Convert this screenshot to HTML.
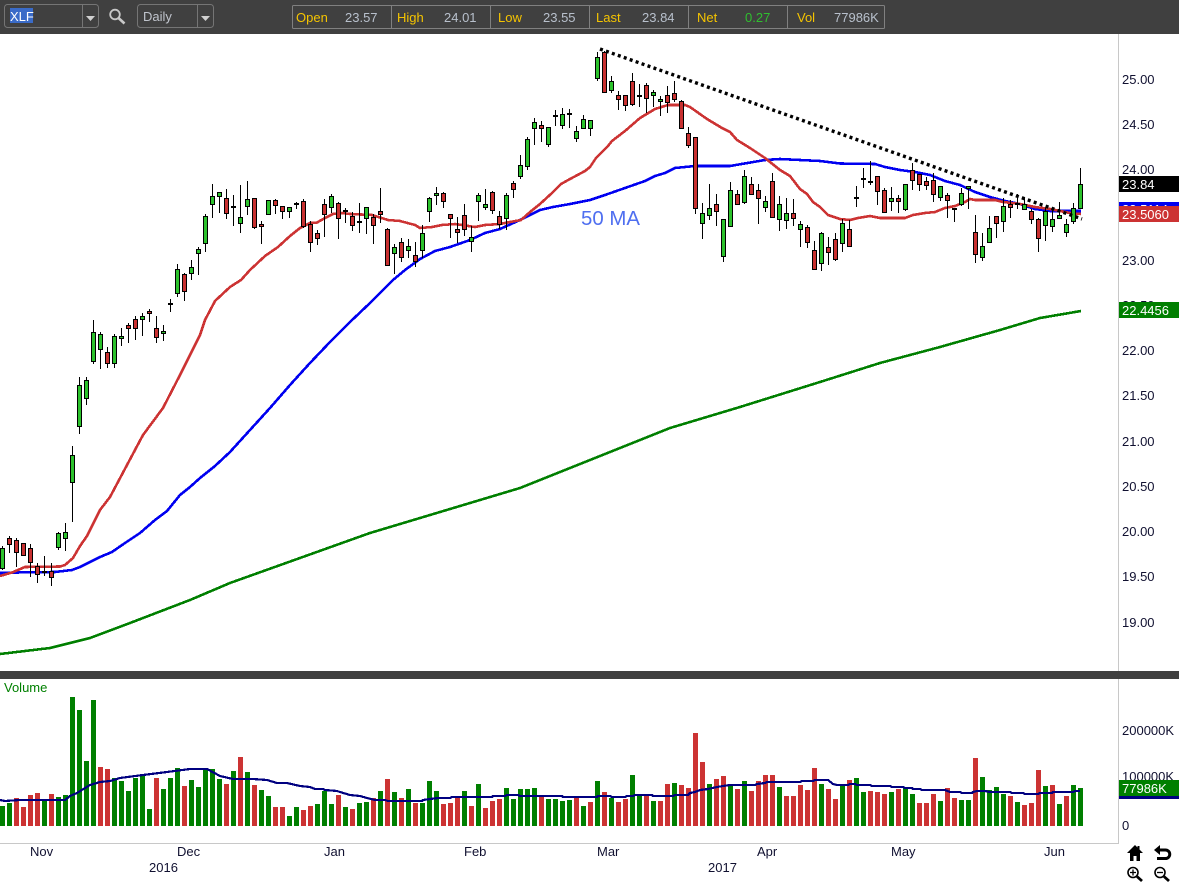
<!DOCTYPE html>
<html><head><meta charset="utf-8"><title>XLF Daily</title>
<style>
html,body{margin:0;padding:0;background:#fff;width:1179px;height:883px;overflow:hidden}
svg{display:block}
text{font-family:"Liberation Sans",Arial,sans-serif;font-size:13px}
.l{fill:#f5c400}.v{fill:#b8c0cc}.a{fill:#101030}.w{fill:#fff}
</style></head><body>
<svg width="1179" height="883" viewBox="0 0 1179 883" xmlns="http://www.w3.org/2000/svg">
<rect width="1179" height="883" fill="#fff"/>
<!-- toolbar -->
<rect width="1179" height="34" fill="#404040"/>
<g fill="none" stroke="#757575" stroke-width="1">
<rect x="4.5" y="4.5" width="94" height="23" rx="3"/><path d="M82.5 5V27"/>
<rect x="137.5" y="4.5" width="76" height="23" rx="3"/><path d="M197.5 5V27"/>
<rect x="292.5" y="5.5" width="592" height="23" rx="1" stroke="#808080"/>
<path d="M391.5 6V28M490.5 6V28M589.5 6V28M688.5 6V28M787.5 6V28" stroke="#808080"/>
</g>
<rect x="10" y="8" width="23" height="15" fill="#3a6bc8"/>
<text x="10" y="21" fill="#fff">XLF</text>
<path d="M86 16h9l-4.500 5zM201 16h9l-4.500 5z" fill="#d0d0d0"/>
<circle cx="115" cy="14.500" r="4.800" fill="none" stroke="#c8c8c8" stroke-width="1.800"/>
<path d="M118.500 18l6 5.500" stroke="#c8c8c8" stroke-width="2.600" fill="none"/>
<text x="143" y="21" fill="#c0c4cc">Daily</text>
<text class="l" x="296" y="22">Open</text><text class="v" x="345" y="22">23.57</text>
<text class="l" x="397" y="22">High</text><text class="v" x="444" y="22">24.01</text>
<text class="l" x="498" y="22">Low</text><text class="v" x="543" y="22">23.55</text>
<text class="l" x="596" y="22">Last</text><text class="v" x="642" y="22">23.84</text>
<text class="l" x="697" y="22">Net</text><text x="745" y="22" fill="#2fbf2f">0.27</text>
<text class="l" x="797" y="22">Vol</text><text class="v" x="834" y="22">77986K</text>
<!-- frame -->
<rect y="671" width="1179" height="8" fill="#404040"/>
<path d="M1118.500 34V671M1118.500 679V844M0 843.500H1118" stroke="#c8c8c8" stroke-width="1" fill="none" shape-rendering="crispEdges"/>
<!-- moving averages -->
<g fill="none" stroke-width="2.600" stroke-linejoin="round" shape-rendering="crispEdges">
<polyline stroke="#007f00" points="0,654 50,648 90,638 130,623 190,600 230,583 300,558 370,533 440,512 520,488 600,456 670,428 740,407 820,382 880,363 940,347 1000,330 1040,318 1081,311"/>
<polyline stroke="#0000f0" points="0,573 15,572.500 55,572 72,570 80,567 90,562 100,557 112,552 125,543 140,533 155,520 167,511 180,495 190,487 200,478 215,466 230,452 250,430 270,408 290,385 310,363 330,342 350,322 370,303 393,280 405,270 420,259 435,251 450,247 470,240 485,233 500,229 520,220 540,210 553,207 570,204 590,200 605,195 625,188 645,181 655,176 665,173 675,168 695,166 730,166 765,160 780,159 800,160 820,161 840,163.500 875,164 885,167 900,170 915,172 930,175 945,181 960,185 975,192 990,197 1005,201 1020,204 1035,209 1050,211 1081,211"/>
<polyline stroke="#cc3333" points="0,576 12,572.500 25,567 60,566.500 65,565 73,558 80,546 87,536 100,510 110,497 127,465 143,435 163,408 180,375 200,335 205,320 215,301 230,287 241,280 250,270 265,256 278,247 290,236 300,228 310,223 317,222.500 325,218 333,214 342,213 350,214 372,215 388,220 400,221 415,225 420,228 432,227 442,225 455,224 475,227 485,225 500,224 510,222 521,220 530,212 540,204 552,193 561,184 570,179 585,171 590,167 596,158 608,146 612,141 625,131 640,118 655,109 668,105 685,105 690,107 707,119 722,128 730,132 737,140 750,148 765,158 780,170 790,176 800,189 807,194 813,202 820,207 828,215 840,219 850,220 858,218 870,216 880,218 905,218 913,215 925,213 935,212 945,208 955,206 965,202 970,199 975,200 995,200 1003,202 1020,204 1035,207 1050,209 1060,211 1070,213 1081,214"/>
</g>
<!-- wicks -->
<path shape-rendering="crispEdges" fill="none" stroke="#000" stroke-width="1" d="M2.500 546V570M9.500 536V553M16.500 538V567M30.500 544V577M37.500 563V583M44.500 556V576M51.500 563V586M58.500 532V550M65.500 523V551M72.500 446V522M79.500 377V434M86.500 377V405M93.500 320V364M100.500 332V369M107.500 347V368M114.500 334V368M121.500 328V346M128.500 323V343M135.500 316V340M142.500 313V336M149.500 309V322M156.500 316V343M163.500 325V341M170.500 299V312M177.500 264V297M184.500 273V301M191.500 260V280M198.500 247V275M205.500 214V252M212.500 184V218M219.500 192V213M226.500 189V219M233.500 195V226M240.500 185V233M247.500 181V215M254.500 198V229M261.500 221V244M275.500 199V214M282.500 206V219M289.500 207V218M296.500 202V209M303.500 199V228M310.500 221V252M317.500 230V245M324.500 199V237M331.500 194V213M338.500 202V239M345.500 208V223M352.500 212V231M359.500 203V233M366.500 207V234M373.500 214V244M380.500 188V223M387.500 228V266M394.500 244V274M401.500 238V262M408.500 239V258M415.500 242V267M422.500 225V258M429.500 197V222M436.500 187V205M443.500 192V208M450.500 214V238M457.500 217V243M464.500 204V236M471.500 226V252M478.500 193V221M485.500 189V210M492.500 191V214M499.500 211V229M506.500 193V230M513.500 181V198M520.500 155V179M527.500 137V170M534.500 118V145M541.500 121V142M548.500 127V147M555.500 110V126M562.500 108V129M569.500 109V128M576.500 126V142M583.500 115V129M590.500 120V136M597.500 52V81M604.500 51V93M611.500 76V93M618.500 91V110M625.500 95V111M632.500 73V106M639.500 84V107M646.500 83V113M653.500 90V107M660.500 96V116M667.500 86V113M674.500 81V102M681.500 100V128M688.500 127V148M695.500 137V214M702.500 203V239M709.500 184V220M716.500 194V226M723.500 219V262M730.500 182V226M737.500 190V205M744.500 170V204M751.500 177V195M758.500 184V224M765.500 196V212M772.500 173V218M779.500 196V231M786.500 198V229M793.500 199V226M800.500 221V247M807.500 225V248M814.500 241V270M821.500 232V271M828.500 237V265M835.500 233V261M842.500 219V252M849.500 220V247M856.500 186V207M863.500 168V188M870.500 161V185M877.500 176V205M884.500 188V213M891.500 187V211M898.500 195V213M905.500 184V211M912.500 163V190M919.500 174V191M926.500 177V190M933.500 173V202M940.500 186V201M947.500 193V218M954.500 208V222M961.500 188V206M968.500 186V209M975.500 215V263M982.500 233V261M989.500 216V243M996.500 216V238M1003.500 198V232M1010.500 200V218M1017.500 194V209M1024.500 198V210M1031.500 209V224M1038.500 218V252M1045.500 208V241M1052.500 208V232M1059.500 202V218M1066.500 219V237M1073.500 203V224M1080.500 168V209"/>
<!-- dojis -->
<path shape-rendering="crispEdges" fill="#000" d="M42 571h5v2h-5zM168 303h5v2h-5zM231 206h5v2h-5zM294 203h5v2h-5zM343 210h5v2h-5zM357 221h5v2h-5zM553 115h5v2h-5zM567 113h5v2h-5zM637 95h5v2h-5zM854 197h5v2h-5zM861 178h5v2h-5zM868 181h5v2h-5zM952 208h5v2h-5zM1015 203h5v2h-5z"/>
<!-- green bodies -->
<path shape-rendering="crispEdges" fill="#2cc22c" stroke="#000" stroke-width="1" d="M.5 548.500h4v20h-4zM56.500 533.500h4v14h-4zM63.500 532.500h4v6h-4zM70.500 455.500h4v27h-4zM77.500 385.500h4v41h-4zM84.500 380.500h4v18h-4zM91.500 332.500h4v29h-4zM98.500 334.500h4v15h-4zM112.500 336.500h4v27h-4zM119.500 336.500h4v2h-4zM140.500 316.500h4v3h-4zM161.500 331.500h4v2h-4zM175.500 269.500h4v24h-4zM189.500 267.500h4v6h-4zM196.500 249.500h4v4h-4zM203.500 216.500h4v27h-4zM210.500 196.500h4v8h-4zM217.500 192.500h4v4h-4zM238.500 217.500h4v6h-4zM245.500 199.500h4v7h-4zM266.500 200.500h4v14h-4zM287.500 207.500h4v4h-4zM329.500 196.500h4v11h-4zM364.500 207.500h4v11h-4zM392.500 247.500h4v6h-4zM406.500 246.500h4v4h-4zM420.500 233.500h4v17h-4zM427.500 198.500h4v13h-4zM434.500 193.500h4v2h-4zM469.500 237.500h4v4h-4zM476.500 195.500h4v6h-4zM483.500 204.500h4v3h-4zM504.500 195.500h4v23h-4zM518.500 165.500h4v11h-4zM525.500 139.500h4v27h-4zM532.500 122.500h4v6h-4zM546.500 127.500h4v17h-4zM560.500 114.500h4v11h-4zM574.500 131.500h4v7h-4zM581.500 119.500h4v9h-4zM588.500 120.500h4v8h-4zM595.500 57.500h4v21h-4zM609.500 81.500h4v9h-4zM651.500 92.500h4v3h-4zM658.500 99.500h4v2h-4zM700.500 213.500h4v10h-4zM707.500 208.500h4v7h-4zM721.500 219.500h4v37h-4zM728.500 190.500h4v36h-4zM742.500 176.500h4v26h-4zM763.500 201.500h4v6h-4zM777.500 204.500h4v15h-4zM784.500 213.500h4v7h-4zM798.500 224.500h4v5h-4zM819.500 233.500h4v30h-4zM840.500 223.500h4v20h-4zM889.500 198.500h4v3h-4zM903.500 184.500h4v25h-4zM938.500 186.500h4v11h-4zM959.500 193.500h4v11h-4zM966.500 186.500h4v2h-4zM980.500 246.500h4v11h-4zM987.500 228.500h4v14h-4zM1001.500 206.500h4v15h-4zM1022.500 204.500h4v5h-4zM1043.500 211.500h4v14h-4zM1050.500 219.500h4v7h-4zM1057.500 215.500h4v3h-4zM1064.500 224.500h4v8h-4zM1071.500 208.500h4v13h-4zM1078.500 184.500h4v24h-4z"/>
<!-- red bodies -->
<path shape-rendering="crispEdges" fill="#c83030" stroke="#000" stroke-width="1" d="M7.500 538.500h4v6h-4zM14.500 540.500h4v12h-4zM21.500 543.500h4v12h-4zM28.500 548.500h4v14h-4zM35.500 566.500h4v8h-4zM49.500 571.500h4v6h-4zM105.500 352.500h4v11h-4zM126.500 325.500h4v3h-4zM133.500 319.500h4v9h-4zM147.500 311.500h4v2h-4zM154.500 328.500h4v9h-4zM182.500 274.500h4v17h-4zM224.500 198.500h4v15h-4zM252.500 198.500h4v29h-4zM259.500 224.500h4v2h-4zM273.500 200.500h4v5h-4zM280.500 206.500h4v5h-4zM301.500 201.500h4v25h-4zM308.500 224.500h4v18h-4zM315.500 233.500h4v5h-4zM322.500 204.500h4v10h-4zM336.500 203.500h4v15h-4zM350.500 216.500h4v9h-4zM371.500 217.500h4v8h-4zM378.500 211.500h4v3h-4zM385.500 229.500h4v36h-4zM399.500 242.500h4v15h-4zM413.500 255.500h4v6h-4zM441.500 193.500h4v8h-4zM448.500 214.500h4v4h-4zM455.500 229.500h4v3h-4zM462.500 215.500h4v14h-4zM490.500 192.500h4v18h-4zM497.500 216.500h4v8h-4zM511.500 183.500h4v6h-4zM539.500 125.500h4v3h-4zM602.500 52.500h4v40h-4zM616.500 95.500h4v4h-4zM623.500 95.500h4v10h-4zM630.500 81.500h4v23h-4zM644.500 85.500h4v13h-4zM665.500 95.500h4v7h-4zM672.500 93.500h4v6h-4zM679.500 101.500h4v27h-4zM686.500 133.500h4v12h-4zM693.500 137.500h4v71h-4zM714.500 204.500h4v7h-4zM735.500 194.500h4v10h-4zM749.500 184.500h4v10h-4zM756.500 190.500h4v8h-4zM770.500 181.500h4v36h-4zM791.500 213.500h4v5h-4zM805.500 227.500h4v15h-4zM812.500 250.500h4v19h-4zM826.500 247.500h4v5h-4zM833.500 239.500h4v20h-4zM847.500 229.500h4v17h-4zM875.500 176.500h4v15h-4zM882.500 190.500h4v22h-4zM896.500 198.500h4v3h-4zM910.500 170.500h4v10h-4zM917.500 174.500h4v10h-4zM924.500 181.500h4v4h-4zM931.500 180.500h4v14h-4zM945.500 195.500h4v5h-4zM973.500 232.500h4v22h-4zM994.500 216.500h4v7h-4zM1008.500 204.500h4v3h-4zM1029.500 211.500h4v8h-4zM1036.500 219.500h4v19h-4z"/>
<!-- trend line -->
<path d="M600 49L1082 219" stroke="#000" stroke-width="3.400" stroke-dasharray="3 3.300" fill="none"/>
<text x="581" y="225" style="font-size:20.400px" fill="#4f6ff0">50 MA</text>
<!-- price axis -->
<g class="a">
<text class="a" x="1122" y="84">25.00</text>
<text class="a" x="1122" y="129">24.50</text>
<text class="a" x="1122" y="174">24.00</text>
<text class="a" x="1122" y="265">23.00</text>
<text class="a" x="1122" y="310">22.50</text>
<text class="a" x="1122" y="355">22.00</text>
<text class="a" x="1122" y="400">21.50</text>
<text class="a" x="1122" y="446">21.00</text>
<text class="a" x="1122" y="491">20.50</text>
<text class="a" x="1122" y="536">20.00</text>
<text class="a" x="1122" y="581">19.50</text>
<text class="a" x="1122" y="627">19.00</text>
</g>
<rect x="1119" y="176" width="60" height="16" fill="#000"/><text class="w" x="1122" y="189">23.84</text>
<rect x="1119" y="202" width="60" height="16" fill="#0000f0"/><text class="w" x="1122" y="214">23.5114</text>
<rect x="1119" y="206" width="60" height="16" fill="#cc3333"/><text class="w" x="1122" y="219">23.5060</text>
<rect x="1119" y="302" width="60" height="16" fill="#007f00"/><text class="w" x="1122" y="315">22.4456</text>
<!-- volume -->
<text x="4" y="692" fill="#008000">Volume</text>
<path shape-rendering="crispEdges" fill="#007f00" d="M0 806h5V826h-5zM7 803h5V826h-5zM42 800h5V826h-5zM56 797h5V826h-5zM63 795h5V826h-5zM70 697h5V826h-5zM77 710h5V826h-5zM84 761h5V826h-5zM91 700h5V826h-5zM112 778h5V826h-5zM119 781h5V826h-5zM126 791h5V826h-5zM133 778h5V826h-5zM140 776h5V826h-5zM147 809h5V826h-5zM161 789h5V826h-5zM168 778h5V826h-5zM175 768h5V826h-5zM189 780h5V826h-5zM196 787h5V826h-5zM203 769h5V826h-5zM210 769h5V826h-5zM217 779h5V826h-5zM231 771h5V826h-5zM245 772h5V826h-5zM259 790h5V826h-5zM266 796h5V826h-5zM287 816h5V826h-5zM294 807h5V826h-5zM315 804h5V826h-5zM322 791h5V826h-5zM329 804h5V826h-5zM343 807h5V826h-5zM357 803h5V826h-5zM364 802h5V826h-5zM378 791h5V826h-5zM392 792h5V826h-5zM406 789h5V826h-5zM420 803h5V826h-5zM427 781h5V826h-5zM434 791h5V826h-5zM462 791h5V826h-5zM476 784h5V826h-5zM504 788h5V826h-5zM511 799h5V826h-5zM518 789h5V826h-5zM525 789h5V826h-5zM532 788h5V826h-5zM546 799h5V826h-5zM553 799h5V826h-5zM560 801h5V826h-5zM567 800h5V826h-5zM581 806h5V826h-5zM595 781h5V826h-5zM609 798h5V826h-5zM630 775h5V826h-5zM637 795h5V826h-5zM651 801h5V826h-5zM672 783h5V826h-5zM707 784h5V826h-5zM728 785h5V826h-5zM742 781h5V826h-5zM777 787h5V826h-5zM819 784h5V826h-5zM840 785h5V826h-5zM854 778h5V826h-5zM861 792h5V826h-5zM889 792h5V826h-5zM903 787h5V826h-5zM910 794h5V826h-5zM938 801h5V826h-5zM959 800h5V826h-5zM966 800h5V826h-5zM980 777h5V826h-5zM987 790h5V826h-5zM994 787h5V826h-5zM1001 794h5V826h-5zM1015 802h5V826h-5zM1043 786h5V826h-5zM1057 804h5V826h-5zM1071 785h5V826h-5zM1078 788h5V826h-5z"/>
<path shape-rendering="crispEdges" fill="#cc3333" d="M14 798h5V826h-5zM21 807h5V826h-5zM28 795h5V826h-5zM35 793h5V826h-5zM49 794h5V826h-5zM98 767h5V826h-5zM105 769h5V826h-5zM154 778h5V826h-5zM182 786h5V826h-5zM224 784h5V826h-5zM238 757h5V826h-5zM252 785h5V826h-5zM273 807h5V826h-5zM280 807h5V826h-5zM301 810h5V826h-5zM308 806h5V826h-5zM336 795h5V826h-5zM350 809h5V826h-5zM371 798h5V826h-5zM385 779h5V826h-5zM399 798h5V826h-5zM413 803h5V826h-5zM441 804h5V826h-5zM448 803h5V826h-5zM455 797h5V826h-5zM469 806h5V826h-5zM483 808h5V826h-5zM490 801h5V826h-5zM497 799h5V826h-5zM539 796h5V826h-5zM574 797h5V826h-5zM588 802h5V826h-5zM602 792h5V826h-5zM616 802h5V826h-5zM623 799h5V826h-5zM644 795h5V826h-5zM658 801h5V826h-5zM665 784h5V826h-5zM679 785h5V826h-5zM686 788h5V826h-5zM693 733h5V826h-5zM700 762h5V826h-5zM714 779h5V826h-5zM721 776h5V826h-5zM735 789h5V826h-5zM749 791h5V826h-5zM756 781h5V826h-5zM763 775h5V826h-5zM770 775h5V826h-5zM784 796h5V826h-5zM791 796h5V826h-5zM798 785h5V826h-5zM805 790h5V826h-5zM812 768h5V826h-5zM826 789h5V826h-5zM833 799h5V826h-5zM847 780h5V826h-5zM868 791h5V826h-5zM875 792h5V826h-5zM882 794h5V826h-5zM896 789h5V826h-5zM917 803h5V826h-5zM924 803h5V826h-5zM931 794h5V826h-5zM945 788h5V826h-5zM952 798h5V826h-5zM973 758h5V826h-5zM1008 796h5V826h-5zM1022 805h5V826h-5zM1029 803h5V826h-5zM1036 770h5V826h-5zM1050 785h5V826h-5zM1064 796h5V826h-5z"/>
<polyline fill="none" stroke="#000080" stroke-width="2.200" shape-rendering="crispEdges" points="0,800 5,801 20,800 65,800 70,796 77,793 90,785 100,782 110,781 120,778 143,775 167,772 190,769 207,769 220,776 233,779 253,779 267,780 277,783 287,783 300,786 310,787 315,789 323,789 325,790 337,791 340,792 350,795 360,796 367,798 375,800 385,800 388,801 422,801 423,800 430,799 438,798 450,798 452,797 492,797 493,796 505,796 507,795 518,795 520,796 562,796 563,797 597,797 598,796 610,796 612,797 625,797 627,796 633,796 635,795 652,795 653,796 673,796 675,795 688,795 690,793 695,792 700,790 708,789 717,787 723,786 730,785 755,785 757,784 765,783 767,782 800,782 802,781 813,781 815,780 828,780 833,784 837,785 848,785 850,784 855,784 857,785 870,785 872,786 890,786 892,787 903,787 905,788 912,788 913,789 920,789 922,790 945,790 950,792 960,792 962,793 972,793 973,792 977,791 985,791 990,792 1010,792 1012,793 1023,793 1025,794 1038,794 1040,793 1052,793 1053,792 1073,792 1075,791 1080,791"/>
<!-- volume axis -->
<text class="a" x="1122" y="735">200000K</text>
<text class="a" x="1122" y="781">100000K</text>
<text class="a" x="1122" y="830">0</text>
<rect x="1119" y="780" width="60" height="16" fill="#007f00"/><text class="w" x="1122" y="793">77986K</text>
<rect x="1119" y="796" width="60" height="3" fill="#000080"/>
<!-- time axis -->
<g>
<text class="a" x="30" y="856">Nov</text>
<text class="a" x="177" y="856">Dec</text>
<text class="a" x="324" y="856">Jan</text>
<text class="a" x="464" y="856">Feb</text>
<text class="a" x="597" y="856">Mar</text>
<text class="a" x="757" y="856">Apr</text>
<text class="a" x="891" y="856">May</text>
<text class="a" x="1044" y="856">Jun</text>
<text class="a" x="149" y="872">2016</text>
<text class="a" x="708" y="872">2017</text>
</g>
<!-- nav icons -->
<path d="M1135 845L1127 853H1130V861H1133.500V856H1136.500V861H1140V853H1143L1139.500 849.500V846H1137.500V847.500Z" fill="#000"/>
<path d="M1154 850L1160 845V855Z" fill="#000"/>
<path d="M1158 850H1165.500A4.200 4.200 0 0 1 1165.500 858.500H1157" fill="none" stroke="#000" stroke-width="3"/>
<circle cx="1133" cy="872.500" r="5" fill="none" stroke="#000" stroke-width="1.600"/>
<path d="M1137 876.500L1142 881" stroke="#000" stroke-width="2.800" fill="none"/>
<path d="M1130 872.500H1136M1133 869.500V875.500" stroke="#000" stroke-width="1.300" fill="none"/>
<circle cx="1160" cy="872.500" r="5" fill="none" stroke="#000" stroke-width="1.600"/>
<path d="M1164 876.500L1169 881" stroke="#000" stroke-width="2.800" fill="none"/>
<path d="M1157 872.500H1163" stroke="#000" stroke-width="1.300" fill="none"/>
</svg>
</body></html>
